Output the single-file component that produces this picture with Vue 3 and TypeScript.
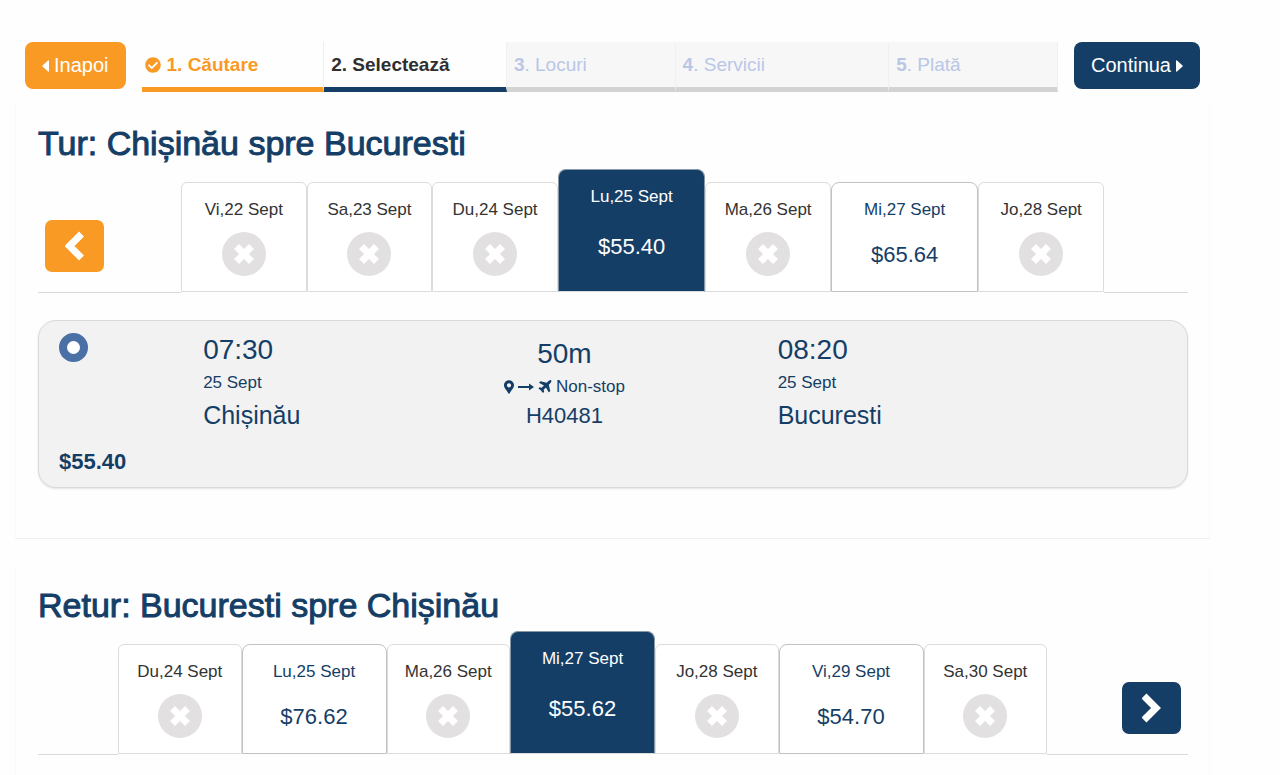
<script setup lang="ts">
import { ref } from 'vue'

interface Step {
  label: string
  state: 'done' | 'current' | 'todo'
  size: string
}

interface Day {
  date: string
  price?: string
}

const steps: Step[] = [
  { label: 'Căutare', state: 'done', size: 'wide' },
  { label: 'Selectează', state: 'current', size: 'wide' },
  { label: 'Locuri', state: 'todo', size: 'narrow' },
  { label: 'Servicii', state: 'todo', size: 'widest' },
  { label: 'Plată', state: 'todo', size: 'narrow' },
]

const outboundDays: Day[] = [
  { date: 'Vi,22 Sept' },
  { date: 'Sa,23 Sept' },
  { date: 'Du,24 Sept' },
  { date: 'Lu,25 Sept', price: '$55.40' },
  { date: 'Ma,26 Sept' },
  { date: 'Mi,27 Sept', price: '$65.64' },
  { date: 'Jo,28 Sept' },
]

const returnDays: Day[] = [
  { date: 'Du,24 Sept' },
  { date: 'Lu,25 Sept', price: '$76.62' },
  { date: 'Ma,26 Sept' },
  { date: 'Mi,27 Sept', price: '$55.62' },
  { date: 'Jo,28 Sept' },
  { date: 'Vi,29 Sept', price: '$54.70' },
  { date: 'Sa,30 Sept' },
]

const legs = [
  { key: 'tur', title: 'Tur: Chișinău spre Bucuresti', days: outboundDays },
  { key: 'retur', title: 'Retur: Bucuresti spre Chișinău', days: returnDays },
]

const selected = ref<Record<string, number>>({ tur: 3, retur: 3 })
const trip = ref('H40481')
</script>

<template>
  <main class="page">
    <header class="topbar">
      <button type="button" class="nav-btn back">
        <svg class="caret" viewBox="0 0 7 12" aria-hidden="true"><path d="M7 1v10q0 1-1 .5L.5 6.500q-.5-.5 0-1L6 .5q1-.5 1 .5z" /></svg>
        <span>Inapoi</span>
      </button>
      <ol class="steps">
        <li v-for="(step, i) in steps" :key="step.label" class="step" :class="[step.state, step.size]">
          <svg v-if="step.state === 'done'" class="check" viewBox="0 0 512 512" aria-hidden="true">
            <path d="M504 256c0 136.967-111.033 248-248 248S8 392.967 8 256 119.033 8 256 8s248 111.033 248 248zM227.314 387.314l184-184c6.248-6.248 6.248-16.379 0-22.627l-22.627-22.627c-6.248-6.249-16.379-6.249-22.628 0L216 308.118l-70.059-70.059c-6.248-6.248-16.379-6.248-22.628 0l-22.627 22.627c-6.248 6.248-6.248 16.379 0 22.627l104 104c6.249 6.249 16.379 6.249 22.628.001z" />
          </svg>
          <span><b>{{ i + 1 }}</b>. {{ step.label }}</span>
        </li>
      </ol>
      <button type="button" class="nav-btn next">
        <span>Continua</span>
        <svg class="caret" viewBox="0 0 7 12" aria-hidden="true"><path d="M0 1v10q0 1 1 .5l5.500-5q.5-.5 0-1L1 .5Q0 0 0 1z" /></svg>
      </button>
    </header>

    <section v-for="leg in legs" :key="leg.key" class="leg" :class="leg.key">
      <h2 class="title">{{ leg.title }}</h2>

      <div class="strip">
        <div class="side before">
          <button v-if="leg.key === 'tur'" type="button" class="arrow prev" aria-label="Zilele anterioare">
            <svg viewBox="0 0 20 30" aria-hidden="true"><path d="M16.5 3l-12 12 12 12" /></svg>
          </button>
        </div>
        <div class="days">
          <button
            v-for="(day, i) in leg.days"
            :key="day.date"
            type="button"
            class="day"
            :class="{ available: day.price, selected: selected[leg.key] === i }"
            :disabled="!day.price"
            @click="selected[leg.key] = i"
          >
            <span class="date">{{ day.date }}</span>
            <span v-if="day.price" class="price">{{ day.price }}</span>
            <svg v-else class="none" viewBox="0 0 44 44" aria-hidden="true">
              <circle cx="22" cy="22" r="22" />
              <path d="M14.500 14.500l15 15M29.500 14.500l-15 15" />
            </svg>
          </button>
        </div>
        <div class="side after">
          <button v-if="leg.key === 'retur'" type="button" class="arrow following" aria-label="Zilele următoare">
            <svg viewBox="0 0 20 30" aria-hidden="true"><path d="M2 3l12 12L2 27" /></svg>
          </button>
        </div>
      </div>

      <label v-if="leg.key === 'tur'" class="trip">
        <span class="choice">
          <input v-model="trip" type="radio" name="trip" value="H40481" />
          <strong>$55.40</strong>
        </span>
        <span class="stop">
          <span class="time">07:30</span>
          <span class="small">25 Sept</span>
          <span class="city">Chișinău</span>
        </span>
        <span class="stop middle">
          <span class="time">50m</span>
          <span class="small route">
            <svg class="pin" viewBox="0 0 384 512" aria-hidden="true">
              <path d="M172.268 501.67C26.97 291.031 0 269.413 0 192 0 85.961 85.961 0 192 0s192 85.961 192 192c0 77.413-26.97 99.031-172.268 309.67-9.535 13.774-29.93 13.773-39.464 0zM192 272c44.183 0 80-35.817 80-80s-35.817-80-80-80-80 35.817-80 80 35.817 80 80 80z" />
            </svg>
            <svg class="line" viewBox="0 0 16 8" aria-hidden="true"><path d="M0 3h11V.5L16 4l-5 3.500V5H0z" /></svg>
            <svg class="plane" viewBox="128 128 1536 1536" aria-hidden="true">
              <path d="M1568 160q44 52 12 148t-108 172l-161 161 160 696q5 19-12 33l-128 96q-7 6-19 6-4 0-7-1-15-3-21-16l-279-508-259 259 53 194q5 17-8 31l-96 96q-9 9-23 9h-2q-15-2-24-13l-189-252-252-189q-11-7-13-23-1-13 9-25l96-97q9-9 23-9 6 0 8 1l194 53 259-259-508-279q-14-8-17-24-2-16 9-27l128-128q14-13 30-8l665 159 160-160q76-76 172-108t148 12z" />
            </svg>
            <span>Non-stop</span>
          </span>
          <span class="flight">H40481</span>
        </span>
        <span class="stop">
          <span class="time">08:20</span>
          <span class="small">25 Sept</span>
          <span class="city">Bucuresti</span>
        </span>
      </label>
    </section>
  </main>
</template>

<style>
body {
  margin: 0;
  background: #fefefe;
}
</style>

<style scoped>
.page {
  padding: 42px 70px 0 15px;
  font-family: "Liberation Sans", Arial, sans-serif;
  color: #153e67;
}

button {
  font-family: inherit;
  cursor: pointer;
}

.topbar {
  display: flex;
  align-items: flex-start;
  gap: 16px;
  padding: 0 10px;
}

.nav-btn {
  display: flex;
  align-items: center;
  justify-content: center;
  gap: 5px;
  height: 47px;
  padding: 0 17px;
  border: 0;
  border-radius: 8px;
  font-size: 20px;
  color: #fff;
}

.back,
.prev {
  background: #f99a25;
}

.next,
.following {
  background: #153e67;
}

.caret {
  width: 7px;
  height: 12px;
  fill: currentColor;
}

.steps {
  display: flex;
  flex: 1;
  margin: 0;
  padding: 0;
  list-style: none;
}

.step {
  display: flex;
  align-items: center;
  gap: 6px;
  box-sizing: border-box;
  height: 50px;
  padding: 0 6px 0 7px;
  border-right: 1px solid #f0f0f0;
  border-bottom: 5px solid #d3d3d3;
  font-size: 19px;
  white-space: nowrap;
}

.narrow {
  flex: 155 1 0;
}

.wide {
  flex: 169 1 0;
}

.widest {
  flex: 200 1 0;
}

.done {
  padding: 0 10px 0 3px;
  border-bottom-color: #f99a25;
  font-weight: bold;
  color: #f99a25;
}

.current {
  border-bottom-color: #153e67;
  font-weight: bold;
  color: #2f2f2f;
}

.todo {
  background: #f7f7f7;
  color: #b9c7e6;
}

.check {
  width: 16px;
  height: 16px;
  fill: currentColor;
}

.leg {
  padding: 19px 21px 50px 22px;
  border: 1px solid #fafafa;
  border-top: 0;
  border-bottom-color: #f0f0f0;
}

.tur {
  margin-top: 12px;
}

.retur {
  margin-top: 27px;
  padding-bottom: 20px;
  border-bottom: 0;
}

.title {
  margin: 0;
  font-size: 34px;
  font-weight: normal;
  line-height: 40px;
  -webkit-text-stroke: 1px currentColor;
}

.strip {
  display: flex;
  margin-top: 6px;
}

.side {
  display: flex;
  align-items: flex-end;
  border-bottom: 1px solid #dadada;
}

.after {
  justify-content: flex-end;
}

.tur .before {
  flex: 143 1 0;
}

.tur .days {
  flex: 923 1 0;
}

.tur .after {
  flex: 84 1 0;
}

.retur .before {
  flex: 80 1 0;
}

.retur .days {
  flex: 929 1 0;
}

.retur .after {
  flex: 141 1 0;
}

.arrow {
  display: flex;
  align-items: center;
  justify-content: center;
  width: 59px;
  height: 52px;
  margin: 0 7px 20px;
  padding: 0;
  border: 0;
  border-radius: 7px;
}

.arrow svg {
  width: 20px;
  height: 30px;
  fill: none;
  stroke: #fff;
  stroke-width: 7;
}

.days {
  display: flex;
  align-items: flex-end;
  margin-bottom: 1px;
}

.day {
  display: flex;
  flex: 17 1 0;
  flex-direction: column;
  align-items: center;
  justify-content: flex-start;
  box-sizing: border-box;
  height: 110px;
  padding: 17px 0 0;
  border: 1px solid #dcdcdc;
  border-radius: 6px 6px 0 0;
  background: #fff;
  font-size: 17px;
  white-space: nowrap;
  color: #333;
}

.available {
  flex-grow: 20;
  border-color: #c2c2c2;
  border-radius: 8px 8px 0 0;
  color: #153e67;
}

.selected {
  height: 123px;
  border-color: #8798a8 #8798a8 #dcdcdc;
  background: #153e67;
  color: #fff;
}

.date {
  line-height: 20px;
}

.price {
  margin-top: 19px;
  font-size: 22px;
  line-height: 32px;
}

.selected .price {
  margin-top: 24px;
}

.none {
  width: 44px;
  height: 44px;
  margin-top: 12px;
  fill: #e2e0e1;
}

.none path {
  stroke: #fff;
  stroke-width: 7;
}

.trip {
  display: grid;
  grid-template-columns: 144fr 148fr 426fr 389fr;
  margin-top: 27px;
  padding: 12px 20px 12px;
  border: 1px solid #d9d9d9;
  border-radius: 18px;
  background: #f2f2f2;
  box-shadow: 0 1px 2px #e4e4e4;
}

.choice {
  display: flex;
  flex-direction: column;
  justify-content: space-between;
  align-items: flex-start;
  gap: 87px;
}

.choice input {
  appearance: none;
  width: 29px;
  height: 29px;
  margin: 0;
  border: 8px solid #4a70a5;
  border-radius: 50%;
  background: #fff;
}

.choice strong {
  font-size: 22px;
  line-height: 26px;
}

.stop {
  display: flex;
  flex-direction: column;
}

.middle {
  align-items: center;
  padding-top: 4px;
}

.time {
  font-size: 28px;
  line-height: 34px;
}

.small {
  font-size: 17px;
  line-height: 32px;
}

.city {
  font-size: 25px;
  line-height: 32px;
}

.flight {
  font-size: 22px;
  line-height: 26px;
}

.route {
  display: flex;
  align-items: center;
  gap: 4px;
}

.route svg {
  fill: currentColor;
}

.pin {
  width: 10px;
  height: 14px;
}

.line {
  width: 16px;
  height: 8px;
}

.plane {
  width: 14px;
  height: 14px;
}
</style>
